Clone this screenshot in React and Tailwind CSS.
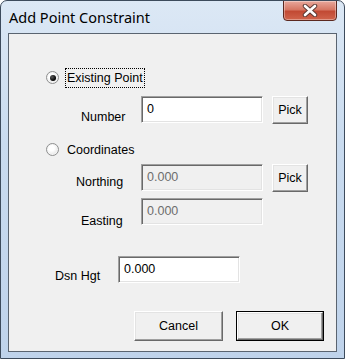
import React from 'react'

const FONT = "font-['Liberation_Sans',Arial,sans-serif]"

function Radio({ checked }) {
  return (
    <span className="flex h-[13px] w-[13px] shrink-0 items-center justify-center rounded-full border border-[#8e8f8f] bg-[radial-gradient(circle_at_40%_35%,#ffffff_30%,#d8d8d8)] shadow-[inset_0_0_0_1px_#f4f4f4]">
      {checked && <span className="h-[6px] w-[6px] rounded-full bg-[radial-gradient(circle_at_35%_35%,#5a5a5a,#000000_70%)]" />}
    </span>
  )
}

function Field({ value, disabled, w = 'w-[122px]' }) {
  return (
    <div
      className={`${w} h-[27px] shrink-0 border border-t-[#a0a0a0] border-l-[#a0a0a0] border-b-white border-r-white px-[5px] pt-[5px] text-[12.5px] leading-[14px] shadow-[inset_1px_1px_0_#696969,inset_-1px_-1px_0_#e3e3e3] ${disabled ? 'bg-[#f0f0f0] text-[#6d6d6d]' : 'bg-white text-black'}`}
    >
      {value}
    </div>
  )
}

function Button({ children, w, h = 'h-[28px]', isDefault }) {
  const btn = (
    <div className={`flex ${isDefault ? 'h-full w-full' : `${w} ${h}`} shrink-0 items-center justify-center border border-t-white border-l-white border-b-[#696969] border-r-[#696969] bg-[#f0f0f0] text-[12.5px] text-black shadow-[inset_-1px_-1px_0_#a0a0a0,inset_1px_1px_0_#e3e3e3]`}>
      {children}
    </div>
  )
  if (!isDefault) return btn
  return <div className={`${w} ${h} shrink-0 border border-[#000000]`}>{btn}</div>
}

export default function App() {
  return (
    <div className={`flex h-[359px] w-[345px] flex-col overflow-hidden rounded-t-[7px] border border-[#3d4b5c] bg-[linear-gradient(180deg,#dce8f5_0%,#c9dbef_40%,#bfd3eb_100%)] ${FONT}`}>
      {/* title bar */}
      <div className="flex h-[32px] shrink-0 items-start justify-between">
        <div className="pl-[8px] pt-[6px] font-['Noto_Sans',sans-serif] text-[14.5px] leading-[20px] text-black">Add Point Constraint</div>
        <div className="mr-[7px] mt-[-1px] flex h-[21px] w-[54px] items-center justify-center rounded-b-[4px] border border-[#5b2820] bg-[linear-gradient(180deg,#e8a89c_0%,#d67764_45%,#c24a34_55%,#d0644c_100%)] shadow-[inset_0_0_0_1px_rgba(255,255,255,0.35)]">
          <svg width="16" height="13" viewBox="0 0 16 13">
            <path d="M3 2 L13 11 M13 2 L3 11" stroke="#5b3a36" strokeWidth="4.5" strokeLinecap="round" />
            <path d="M3 2 L13 11 M13 2 L3 11" stroke="#ffffff" strokeWidth="2.6" strokeLinecap="round" />
          </svg>
        </div>
      </div>

      {/* client area */}
      <div className="mx-[7px] mb-[6px] flex h-[319px] flex-col border border-[#5a6470] bg-[#f0f0f0] text-[12.5px] leading-[14px] text-black">
        {/* Existing Point */}
        <div className="mt-[34px] flex h-[19px] items-center pl-[37px]">
          <Radio checked />
          <span className="ml-[6px] border border-dotted border-black px-[1px] py-[2px]">Existing Point</span>
        </div>

        {/* Number */}
        <div className="mt-[9px] flex items-start">
          <div className="w-[132px] shrink-0 pl-[72px] pt-[14px]">Number</div>
          <Field value="0" />
          <div className="ml-[9px]">
            <Button w="w-[36px]">Pick</Button>
          </div>
        </div>

        {/* Coordinates */}
        <div className="mt-[16px] flex h-[19px] items-center pl-[37px]">
          <Radio />
          <span className="ml-[7px] py-[2px] pl-[1px]">Coordinates</span>
        </div>

        {/* Northing */}
        <div className="mt-[5px] flex items-start">
          <div className="w-[132px] shrink-0 pl-[67px] pt-[11px]">Northing</div>
          <Field value="0.000" disabled />
          <div className="ml-[9px]">
            <Button w="w-[36px]">Pick</Button>
          </div>
        </div>

        {/* Easting */}
        <div className="mt-[6px] flex items-start">
          <div className="w-[132px] shrink-0 pl-[72px] pt-[16px]">Easting</div>
          <Field value="0.000" disabled />
        </div>

        {/* Dsn Hgt */}
        <div className="mt-[28px] flex items-start">
          <div className="w-[109px] shrink-0 pl-[46px] pt-[13px]">Dsn Hgt</div>
          <Field value="0.000" />
        </div>

        {/* buttons */}
        <div className="mt-[28px] flex pl-[125px]">
          <Button w="w-[89px]" h="h-[30px]">Cancel</Button>
          <div className="ml-[13px]">
            <Button w="w-[88px]" h="h-[30px]" isDefault>OK</Button>
          </div>
        </div>
      </div>
    </div>
  )
}
